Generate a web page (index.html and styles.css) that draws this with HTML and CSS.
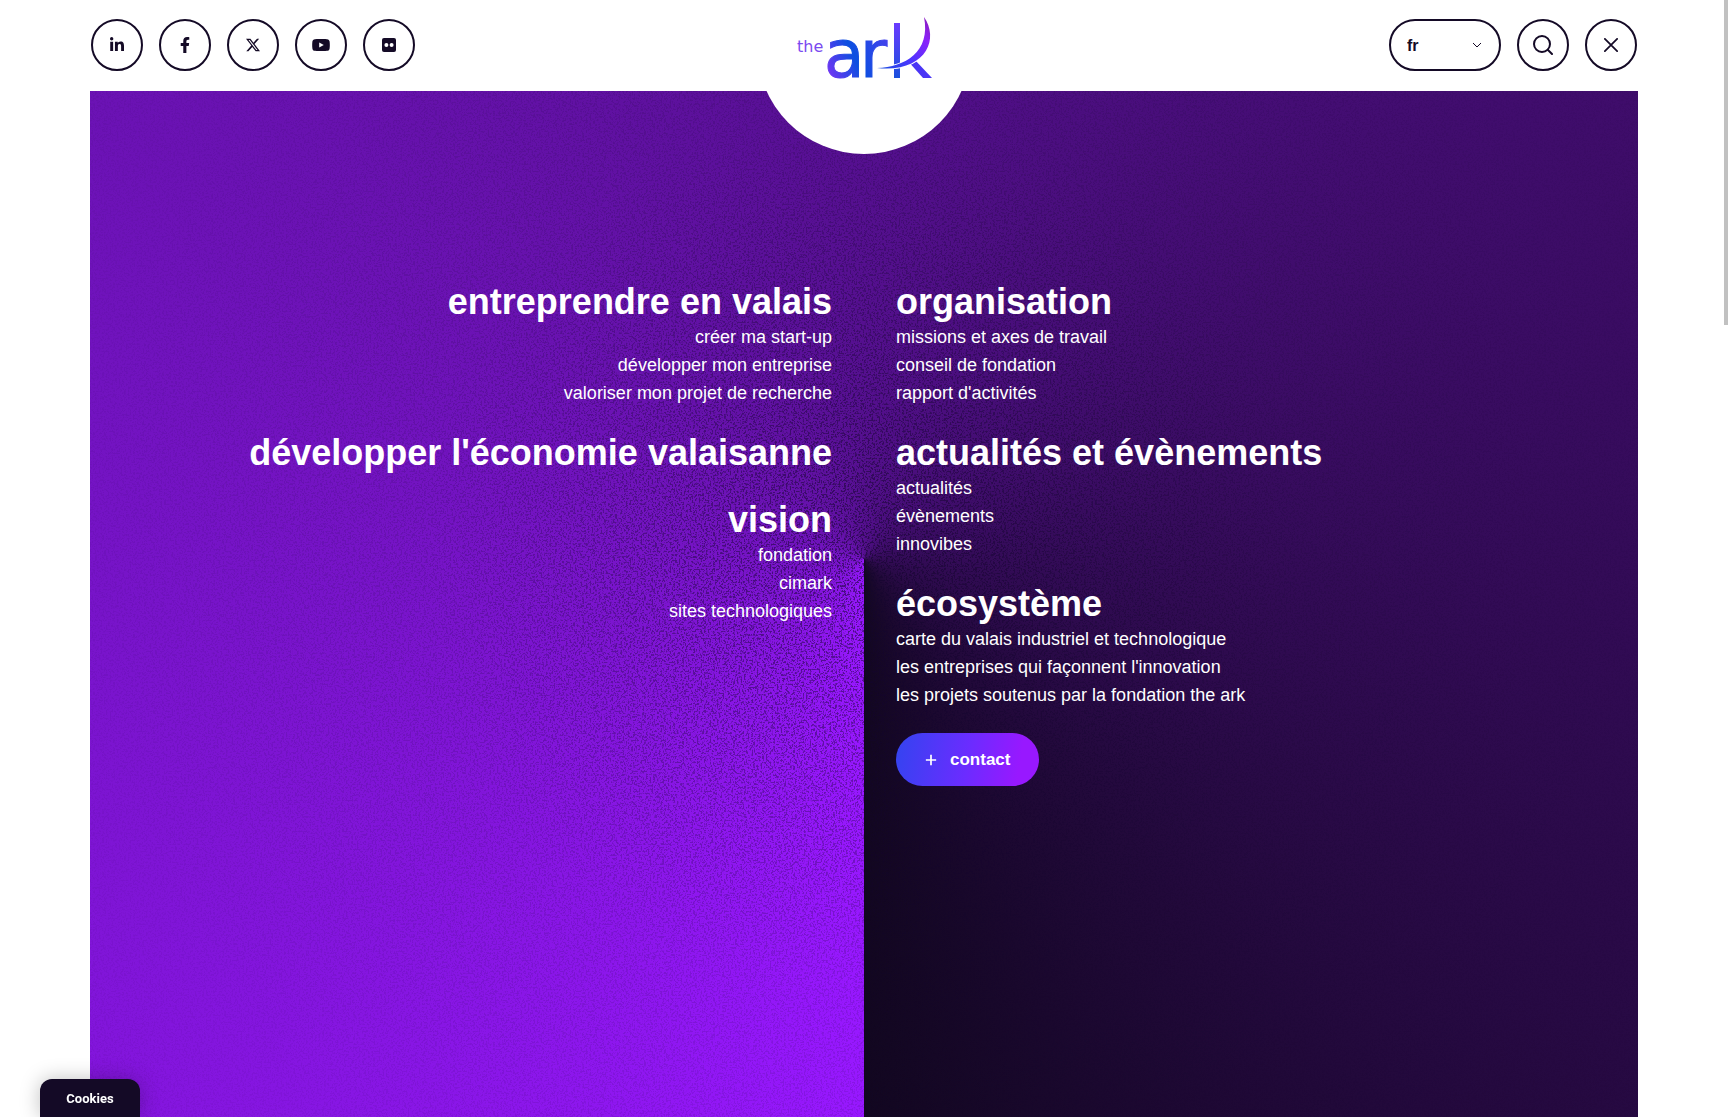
FILE: index.html
```html
<!DOCTYPE html>
<html lang="fr">
<head>
  <meta charset="UTF-8">
  <meta name="viewport" content="width=device-width, initial-scale=1.0">
  <title>The Ark</title>
  <link rel="stylesheet" href="styles.css">
</head>

<body>
  <header class="header">
    <div class="social">
      <a class="round" href="#" aria-label="LinkedIn">
        <svg width="14" height="16" viewBox="0 0 448 512"><path d="M100.28 448H7.4V148.9h92.88zM53.79 108.1C24.09 108.1 0 83.5 0 53.8a53.79 53.79 0 0 1 107.58 0c0 29.7-24.1 54.3-53.79 54.3zM447.9 448h-92.68V302.4c0-34.7-.7-79.2-48.29-79.2-48.29 0-55.69 37.7-55.69 76.7V448h-92.78V148.9h89.08v40.8h1.3c12.4-23.5 42.69-48.3 87.88-48.3 94 0 111.28 61.9 111.28 142.3V448z"/></svg>
      </a>
      <a class="round" href="#" aria-label="Facebook">
        <svg width="10" height="16" viewBox="0 0 320 512"><path d="M279.14 288l14.22-92.66h-88.91v-60.13c0-25.35 12.42-50.06 52.24-50.06h40.42V6.26S260.43 0 225.36 0c-73.22 0-121.08 44.38-121.08 124.72v70.62H22.89V288h81.39v224h100.17V288z"/></svg>
      </a>
      <a class="round" href="#" aria-label="X">
        <svg width="14" height="14" viewBox="0 0 16 16"><path d="M12.6.75h2.454l-5.36 6.142L16 15.25h-4.937l-3.867-5.07-4.425 5.07H.316l5.733-6.57L0 .75h5.063l3.495 4.633L12.601.75Zm-.86 13.028h1.36L4.323 2.145H2.865z"/></svg>
      </a>
      <a class="round" href="#" aria-label="YouTube">
        <svg width="18" height="12" viewBox="0 0 18 12"><path fill-rule="evenodd" d="M3 0.2C6 -0.1 12 -0.1 15 0.2C16.6 0.4 17.400 1.2 17.600 2.600C17.900 4.800 17.900 7.200 17.600 9.400C17.400 10.800 16.600 11.600 15 11.800C12 12.100 6 12.100 3 11.800C1.400 11.600 0.6 10.800 0.4 9.400C0.1 7.200 0.1 4.800 0.4 2.600C0.6 1.200 1.400 0.4 3 0.2ZM7.200 3.400V8.600L11.800 6Z"/></svg>
      </a>
      <a class="round" href="#" aria-label="Flickr">
        <svg width="14" height="14" viewBox="0 0 14 14"><rect width="14" height="14" rx="2"/><circle class="dot" cx="4.400" cy="7" r="2"/><circle class="dot" cx="9.600" cy="7" r="2"/></svg>
      </a>
    </div>

    <a class="logo" href="#" aria-label="The Ark">
      <svg width="138" height="64" viewBox="0 0 138 64">
        <defs>
          <linearGradient id="ark" gradientUnits="userSpaceOnUse" x1="32" y1="62" x2="100" y2="30">
            <stop offset="0" stop-color="#7a33f5"/>
            <stop offset=".45" stop-color="#0b4fe0"/>
            <stop offset="1" stop-color="#4a40ee"/>
          </linearGradient>
          <linearGradient id="stem" x1="0" y1="0" x2="0" y2="1">
            <stop offset="0" stop-color="#6a3bff"/>
            <stop offset="1" stop-color="#1a50dd"/>
          </linearGradient>
          <linearGradient id="swoosh" gradientUnits="userSpaceOnUse" x1="80" y1="52" x2="135" y2="6">
            <stop offset="0" stop-color="#1450dd"/>
            <stop offset=".45" stop-color="#4b35ff"/>
            <stop offset=".8" stop-color="#8a22fa"/>
            <stop offset="1" stop-color="#8a1cc0"/>
          </linearGradient>
        </defs>
        <text class="logo-the" x="2" y="36">the</text>
        <text class="logo-ar" x="29 65" y="61" fill="url(#ark)" stroke="url(#ark)">ar</text>
        <rect x="99" y="7" width="6" height="55" fill="url(#stem)"/>
        <path d="M112 44h8l17 18h-9z" fill="#4a35f5"/>
        <path class="swoosh" d="M82 52C110 51 136 36 129 1C145 24 130 57 82 52z" fill="url(#swoosh)"/>
      </svg>
    </a>

    <div class="tools">
      <div class="lang">
        <select aria-label="Langue">
          <option>fr</option>
          <option>de</option>
          <option>en</option>
        </select>
        <svg width="10" height="6" viewBox="0 0 10 6"><path d="M1 1l4 4 4-4"/></svg>
      </div>
      <button class="round" type="button" aria-label="Rechercher">
        <svg class="line" width="20" height="20" viewBox="0 0 20 20"><circle cx="9" cy="9" r="8"/><path d="M15 15l4 4"/></svg>
      </button>
      <button class="round" type="button" aria-label="Fermer">
        <svg class="line" width="14" height="14" viewBox="0 0 16 16"><path d="M1 1l14 14M15 1L1 15"/></svg>
      </button>
    </div>
  </header>

  <main class="menu">
    <svg class="grain" aria-hidden="true">
      <filter id="noise" x="0" y="0" width="100%" height="100%" color-interpolation-filters="sRGB">
        <feTurbulence type="fractalNoise" baseFrequency=".55" numOctaves="2" seed="4"/>
        <feColorMatrix values="0 0 0 0 .08  0 0 0 0 .02  0 0 0 0 .18  8 0 0 0 -4"/>
      </filter>
      <rect width="100%" height="100%" filter="url(#noise)"/>
    </svg>

    <nav class="columns">
      <div class="column left">
        <section>
          <h2><a href="#">entreprendre en valais</a></h2>
          <ul>
            <li><a href="#">créer ma start-up</a></li>
            <li><a href="#">développer mon entreprise</a></li>
            <li><a href="#">valoriser mon projet de recherche</a></li>
          </ul>
        </section>
        <section>
          <h2><a href="#">développer l'économie valaisanne</a></h2>
        </section>
        <section>
          <h2><a href="#">vision</a></h2>
          <ul>
            <li><a href="#">fondation</a></li>
            <li><a href="#">cimark</a></li>
            <li><a href="#">sites technologiques</a></li>
          </ul>
        </section>
      </div>

      <div class="column">
        <section>
          <h2><a href="#">organisation</a></h2>
          <ul>
            <li><a href="#">missions et axes de travail</a></li>
            <li><a href="#">conseil de fondation</a></li>
            <li><a href="#">rapport d'activités</a></li>
          </ul>
        </section>
        <section>
          <h2><a href="#">actualités et évènements</a></h2>
          <ul>
            <li><a href="#">actualités</a></li>
            <li><a href="#">évènements</a></li>
            <li><a href="#">innovibes</a></li>
          </ul>
        </section>
        <section>
          <h2><a href="#">écosystème</a></h2>
          <ul>
            <li><a href="#">carte du valais industriel et technologique</a></li>
            <li><a href="#">les entreprises qui façonnent l'innovation</a></li>
            <li><a href="#">les projets soutenus par la fondation the ark</a></li>
          </ul>
        </section>
        <a class="contact" href="#">
          <svg width="12" height="12" viewBox="0 0 14 14"><path d="M7 1v12M1 7h12"/></svg>
          contact
        </a>
      </div>
    </nav>
  </main>

  <button class="cookies" type="button">Cookies</button>
  <div class="scrollbar"></div>
</body>
</html>
```

FILE: styles.css
```css
* {
  box-sizing: border-box;
}

body {
  margin: 0;
  min-height: 100vh;
  display: flex;
  flex-direction: column;
  background: #fff;
  color: #140a26;
  font-family: "Liberation Sans", Arial, sans-serif;
}

a {
  color: inherit;
  text-decoration: none;
}

svg {
  display: block;
}

/* header */
.header {
  position: relative;
  z-index: 1;
  display: flex;
  justify-content: space-between;
  align-items: center;
  padding: 19px 91px 20px;
}

.social,
.tools {
  display: flex;
  gap: 16px;
}

.round {
  display: flex;
  align-items: center;
  justify-content: center;
  width: 52px;
  height: 52px;
  padding: 0;
  border: 2px solid #140a26;
  border-radius: 50%;
  background: #fff;
  fill: #140a26;
  cursor: pointer;
}

.dot {
  fill: #fff;
}

.line {
  fill: none;
  stroke: #140a26;
  stroke-width: 2;
  stroke-linecap: round;
}

/* white disc hanging below the header */
.logo {
  position: absolute;
  left: 50%;
  bottom: -63px;
  display: flex;
  justify-content: center;
  align-items: flex-start;
  width: 214px;
  height: 214px;
  padding-top: 76px;
  border-radius: 50%;
  background: #fff;
  transform: translateX(-50%);
}

.logo svg {
  overflow: visible;
}

.logo-the {
  font: 16px "DejaVu Sans", sans-serif;
  fill: #7a4af0;
}

.logo-ar {
  font: 66px "DejaVu Sans", sans-serif;
}

.swoosh {
  stroke: #fff;
  stroke-width: 2;
  paint-order: stroke;
}

.lang {
  display: grid;
  align-items: center;
}

.lang select,
.lang svg {
  grid-area: 1 / 1;
}

.lang select {
  appearance: none;
  width: 112px;
  height: 52px;
  padding: 0 16px;
  border: 2px solid #140a26;
  border-radius: 26px;
  background: #fff;
  color: #140a26;
  font: bold 16px "Liberation Sans", Arial, sans-serif;
}

.lang svg {
  justify-self: end;
  margin-right: 19px;
  fill: none;
  stroke: #140a26;
  pointer-events: none;
}

/* menu */
.menu {
  position: relative;
  flex: 1;
  margin: 0 90px;
  padding: 189px 32px 64px;
  background: conic-gradient(from 180deg at 50% 50%, #9818ff, #120720) fixed;
  color: #fff;
}

.grain {
  position: absolute;
  top: 0;
  left: 0;
  width: 100%;
  height: 100%;
  mask-image: radial-gradient(circle at 50% 45%, rgba(0, 0, 0, .6) 0, rgba(0, 0, 0, .4) 200px, rgba(0, 0, 0, .15) 440px, rgba(0, 0, 0, .05) 800px);
}

.columns {
  position: relative;
  display: grid;
  grid-template-columns: 1fr 1fr;
  gap: 64px;
}

.column {
  display: flex;
  flex-direction: column;
  align-items: flex-start;
  gap: 24px;
}

.left {
  align-items: flex-end;
  text-align: right;
}

h2 {
  margin: 0;
  font-size: 36px;
  line-height: 43px;
}

ul {
  margin: 0;
  padding: 0;
  list-style: none;
  font-size: 18px;
  line-height: 28px;
}

.contact {
  display: flex;
  align-items: center;
  gap: 13px;
  height: 53px;
  padding: 0 29px;
  border-radius: 27px;
  background: linear-gradient(100deg, #3344f0, #6b2cff 50%, #9818ff 85%);
  font-size: 17px;
  font-weight: bold;
}

.contact svg {
  stroke: #fff;
  stroke-width: 2;
}

.cookies {
  position: fixed;
  left: 40px;
  bottom: 0;
  z-index: 2;
  width: 100px;
  height: 38px;
  border: 0;
  border-radius: 12px 12px 0 0;
  background: #140a26;
  box-shadow: 0 0 20px rgba(0, 0, 0, .25);
  color: #fff;
  font: bold 13px Roboto, sans-serif;
}

.scrollbar {
  position: fixed;
  top: 0;
  right: 0;
  z-index: 2;
  width: 4px;
  height: 325px;
  background: #c1c1c1;
}
```
